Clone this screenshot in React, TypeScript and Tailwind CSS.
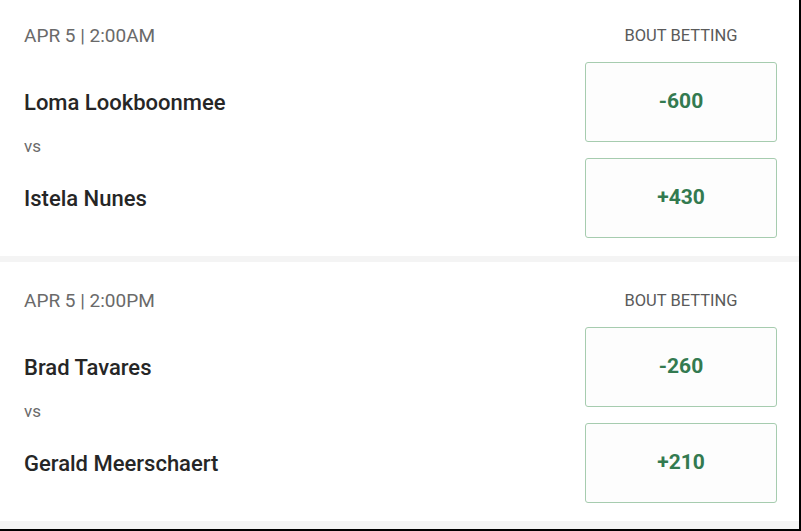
type Bout = {
  id: string;
  time: string;
  fighters: [string, string];
  odds: [string, string];
};

const bouts: Bout[] = [
  {
    id: "b1",
    time: "APR 5 | 2:00AM",
    fighters: ["Loma Lookboonmee", "Istela Nunes"],
    odds: ["-600", "+430"],
  },
  {
    id: "b2",
    time: "APR 5 | 2:00PM",
    fighters: ["Brad Tavares", "Gerald Meerschaert"],
    odds: ["-260", "+210"],
  },
];

const OddsButton = ({ value }: { value: string }) => (
  <button className="h-[80px] w-full flex items-center justify-center rounded-[3px] border-[1.5px] border-[#a6ccaf] bg-[#fdfdfd] text-[21px] font-bold text-[#337a50]">
    {value}
  </button>
);

const BoutCard = ({ bout, first }: { bout: Bout; first?: boolean }) => (
  <div
    className={`bg-white pl-6 pr-[22px] pb-[18px] ${
      first ? "pt-6" : "pt-[27px]"
    }`}
  >
    <div className="flex h-6 items-center justify-between">
      <span className="text-[19px] text-[#6a6a6a]">{bout.time}</span>
      <span className="w-[192px] text-center text-[16.5px] text-[#5a5a5a]">
        BOUT BETTING
      </span>
    </div>
    <div className="mt-[14px] flex justify-between">
      <div className="flex flex-col">
        <div className="flex h-[80px] items-center text-[22px] font-medium text-[#262626]">
          {bout.fighters[0]}
        </div>
        <div className="flex h-[16px] items-center pb-[6px] text-[17px] text-[#6a6a6a]">
          vs
        </div>
        <div className="flex h-[80px] items-center text-[22px] font-medium text-[#262626]">
          {bout.fighters[1]}
        </div>
      </div>
      <div className="flex w-[192px] flex-col gap-4">
        <OddsButton value={bout.odds[0]} />
        <OddsButton value={bout.odds[1]} />
      </div>
    </div>
  </div>
);

export default function App() {
  return (
    <div
      className="h-[531px] w-[801px] overflow-hidden bg-black"
      style={{ fontFamily: "Roboto, 'Liberation Sans', sans-serif" }}
    >
      <div className="flex h-[529px] w-[799px] flex-col gap-[6px] bg-[#f4f4f4]">
        {bouts.map((b, i) => (
          <BoutCard key={b.id} bout={b} first={i === 0} />
        ))}
      </div>
    </div>
  );
}
